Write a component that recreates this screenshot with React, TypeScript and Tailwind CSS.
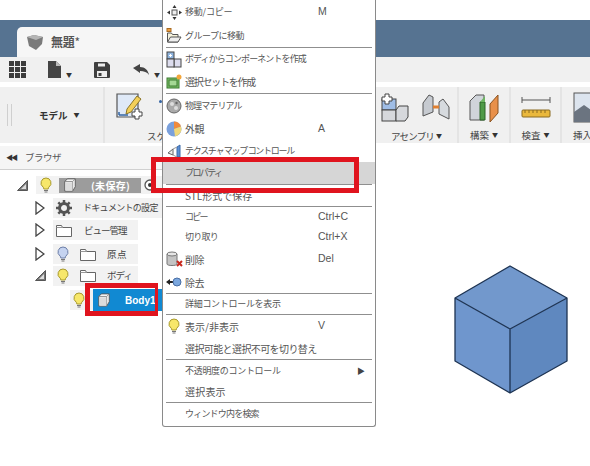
import type { ReactNode } from "react";

const font = { fontFamily: '"Noto Sans CJK JP", "Liberation Sans", sans-serif' };

function Bulb({ off = false }: { off?: boolean }) {
  const fill = off ? "#c5d3f0" : "#f7e76a";
  const line = off ? "#6d7fa8" : "#a89a2e";
  return (
    <svg width="12" height="16" viewBox="0 0 12 16" className="shrink-0">
      <path d="M6 1a5 5 0 0 0-3 9c.6.5.8 1 .8 2h4.400c0-1 .2-1.500.8-2a5 5 0 0 0-3-9z" fill={fill} stroke={line} />
      <path d="M4 13.500h4M4.500 15h3" stroke="#777" strokeWidth="1.200" />
    </svg>
  );
}

function Folder() {
  return (
    <svg width="16" height="13" viewBox="0 0 16 13" className="shrink-0">
      <path d="M.5 12.500v-11h5l1 2h9v9z" fill="#fff" stroke="#666" />
      <path d="M.5 3.500h6" stroke="#999" />
    </svg>
  );
}

function Box({ size = 16 }: { size?: number }) {
  return (
    <svg width={size} height={size} viewBox="0 0 16 16" className="shrink-0">
      <path d="M2 4l3-3h9v9l-3 5H2z" fill="#f4f4f4" stroke="#555" />
      <path d="M11 4v11M2 4h9l3-3" stroke="#888" fill="none" />
      <rect x="3" y="5" width="7.500" height="9.500" fill="#dcdcdc" />
    </svg>
  );
}

function Closed() {
  return (
    <svg width="10" height="14" viewBox="0 0 10 14" className="shrink-0">
      <path d="M1 1l8 6-8 6z" fill="#fff" stroke="#444" strokeWidth="1.300" />
    </svg>
  );
}

function Open() {
  return (
    <svg width="11" height="11" viewBox="0 0 11 11" className="shrink-0">
      <path d="M10.500.5v10H.5z" fill="#777" stroke="#555" />
      <path d="M9 4v5H4z" fill="#ddd" />
    </svg>
  );
}

function Caret() {
  return <span className="text-[6px] leading-none text-[#333]">▼</span>;
}

function Sep() {
  return <div className="mx-[3px] h-px shrink-0 bg-[#8f8f8f]" />;
}

function Row(props: { h: string; icon?: ReactNode; label: string; keyName?: string; arrow?: boolean; active?: boolean; track?: string }) {
  return (
    <div className={`flex shrink-0 items-center text-[10px] text-[#555] ${props.h} ${props.active ? "bg-[#d6d6d6]" : ""}`}>
      <span className="flex w-[22px] shrink-0 justify-center">{props.icon}</span>
      <span className={`w-[133px] shrink-0 whitespace-pre ${props.track ?? ""}`}>{props.label}</span>
      <span className="text-[10.500px]" style={{ fontFamily: '"Liberation Sans", sans-serif' }}>{props.keyName}</span>
      {props.arrow && <span className="ml-[39px] text-[8px] text-[#444]">▶</span>}
    </div>
  );
}

function ContextMenu() {
  return (
    <div className="absolute left-[162px] top-0 flex h-[427px] w-[214px] flex-col rounded-b-[3px] border-x border-b border-[#8a8a8a] bg-white">
      <Row h="h-6" label="移動/コピー" keyName="M" track="text-[9px] tracking-[-0.2px]" icon={
        <svg width="17" height="17" viewBox="0 0 17 17"><path d="M8.500 1l2 3h-4zM8.500 16l2-3h-4zM1 8.500l3-2v4zM16 8.500l-3-2v4z" fill="#333" /><rect x="6" y="6" width="5" height="5" fill="#eee" stroke="#555" /></svg>
      } />
      <Row h="h-[23px]" label="グループに移動" track="text-[9px] tracking-[-0.5px]" icon={
        <svg width="16" height="15" viewBox="0 0 16 15"><rect x="1" y="0.500" width="4" height="3" fill="#f0a040" stroke="#a86a20" /><path d="M1.500 14V5h4l1 1.500H12V14z" fill="#f5f2dc" stroke="#555" /><path d="M1.500 14l3-5H15l-3 5z" fill="#eee" stroke="#555" /></svg>
      } />
      <Sep />
      <Row h="h-[22px]" label="ボディからコンポーネントを作成" track="text-[9px] tracking-[-0.9px]" icon={
        <svg width="16" height="17" viewBox="0 0 16 17"><rect x="1" y="1" width="7" height="7" fill="#8fb4de" stroke="#444" /><rect x="8" y="8" width="7" height="8" fill="#dde" stroke="#444" /><rect x="1" y="8" width="7" height="8" fill="#dde" stroke="#444" /><path d="M3 4.500h3M4.500 3v3" stroke="#fff" /></svg>
      } />
      <Row h="h-[23px]" label="選択セットを作成" track="tracking-[-1.250px]" icon={
        <svg width="16" height="15" viewBox="0 0 16 15"><rect x="1" y="4" width="12" height="10" fill="#7cc06a" stroke="#3c7a30" /><rect x="3" y="6" width="8" height="6" fill="#a5d895" stroke="#3c7a30" /><circle cx="13" cy="3" r="2.500" fill="#f3a63b" /></svg>
      } />
      <Sep />
      <Row h="h-[23px]" label="物理マテリアル" track="text-[9px] tracking-[-0.9px]" icon={
        <svg width="16" height="16" viewBox="0 0 16 16"><circle cx="8" cy="8" r="7" fill="#aaa" stroke="#666" /><circle cx="6" cy="6" r="2" fill="#ddd" /><circle cx="10" cy="10" r="2" fill="#ddd" /><circle cx="10.500" cy="5" r="1.200" fill="#666" /></svg>
      } />
      <Row h="h-[23px]" label="外観" keyName="A" track="tracking-[-0.5px]" icon={
        <svg width="16" height="16" viewBox="0 0 16 16"><circle cx="8" cy="8" r="7.500" fill="#7aa0dc" /><path d="M8 8V.5a7.500 7.500 0 0 1 7 5z" fill="#f08a3c" /><path d="M8 8l7-2.500A7.500 7.500 0 0 1 9 15.400z" fill="#f0d87a" /></svg>
      } />
      <Row h="h-[22px]" label="テクスチャ マップ コントロール" track="text-[9px] tracking-[-1.300px]" icon={
        <svg width="15" height="15" viewBox="0 0 15 15"><path d="M1 9l5-4v6z" fill="#eee" stroke="#666" /><path d="M10 13V3l3-2v12z" fill="#5b8fd6" stroke="#3c6aa8" /><path d="M6 5l4-2M6 11l4 2" stroke="#999" /></svg>
      } />
      <Row h="h-[22px]" label="プロパティ" active track="text-[9px] tracking-[-1.600px]" />
      <Sep />
      <Row h="h-[21px]" label="STL形式で保存" />
      <Sep />
      <Row h="h-5" label="コピー" keyName="Ctrl+C" track="text-[9px] tracking-[-1.700px]" />
      <Row h="h-5" label="切り取り" keyName="Ctrl+X" track="text-[9px] tracking-[-0.750px]" />
      <Row h="h-6" label="削除" keyName="Del" track="tracking-[-0.500px]" icon={
        <svg width="17" height="16" viewBox="0 0 17 16"><path d="M1 3v10c0 2 10 2 10 0V3z" fill="#c4c4c4" stroke="#777" /><ellipse cx="6" cy="3" rx="5" ry="2" fill="#e6e6e6" stroke="#777" /><path d="M11 10l5 5M16 10l-5 5" stroke="#c8281e" strokeWidth="2" /></svg>
      } />
      <Row h="h-[22px]" label="除去" track="tracking-[-0.500px]" icon={
        <svg width="16" height="10" viewBox="0 0 16 10"><path d="M0 5l4-3v2h3v2H4v2z" fill="#222" /><circle cx="11" cy="5" r="4" fill="#7ba7de" stroke="#4a6fa5" /></svg>
      } />
      <Sep />
      <Row h="h-5" label="詳細コントロールを表示" track="text-[9px] tracking-[-0.3px]" />
      <Sep />
      <Row h="h-[22px]" label="表示/非表示" keyName="V" icon={<Bulb />} />
      <Row h="h-[22px]" label="選択可能と選択不可を切り替え" track="tracking-[-0.6px]" />
      <Sep />
      <Row h="h-[21px]" label="不透明度のコントロール" arrow track="text-[9px] tracking-[-0.3px]" />
      <Row h="h-[21px]" label="選択表示" track="tracking-[0.2px]" />
      <Sep />
      <Row h="h-[22px]" label="ウィンドウ内を検索" track="text-[9px] tracking-[-0.8px]" />
    </div>
  );
}

function Ribbon() {
  return (
    <div className="flex h-14 bg-[#f0f0f0] text-[9.500px] text-[#444]">
      <div className="flex w-[105px] items-center border-r-2 border-[#e4e4e4]">
        <div className="ml-[7px] h-[22px] w-[5px] border-x border-[#cfcfcf]" />
        <span className="ml-[27px] flex items-center gap-[6px] font-bold text-[#333]">モデル <Caret /></span>
      </div>
      <div className="flex w-[354px] flex-col border-r-2 border-[#e4e4e4] pt-[6px]">
        <div className="flex h-[30px] items-start">
          <svg width="28" height="28" viewBox="0 0 28 28" className="ml-[11px]">
            <path d="M1 1h21v23H1z" fill="#dfe9f7" stroke="#555" strokeWidth="1.200" />
            <path d="M3 22V19M3 22h9" stroke="#3465a4" strokeWidth="1.500" />
            <path d="M11 16L21 3l4 3-10 13-5 2z" fill="#f3cf58" stroke="#8a7428" />
            <path d="M19 16h4v3h3v4h-3v3h-4v-3h-3v-4h3z" fill="#fff" stroke="#444" />
          </svg>
          <span className="ml-[15px] mt-[7px] size-[3px] rounded-full bg-[#3465a4]" />
          <svg width="30" height="30" viewBox="0 0 30 30" className="ml-[218px]">
            <rect x="2" y="6" width="14" height="11" fill="#9fbde6" stroke="#444" />
            <rect x="2" y="17" width="14" height="11" fill="#d6d8dc" stroke="#444" />
            <path d="M16 17l3-4h9v11l-3 4h-9z" fill="#d6d8dc" stroke="#444" />
            <path d="M5 1h4v3h3v4H9v3H5V8H2V4h3z" fill="#fff" stroke="#444" />
          </svg>
          <svg width="28" height="28" viewBox="0 0 28 28" className="ml-[12px]">
            <path d="M1 23V10l6-8 4 2v15z" fill="#c6cad0" stroke="#555" />
            <path d="M27 26V14l-6-8-4 3v12z" fill="#d6dade" stroke="#555" />
            <path d="M11 14h6" stroke="#e08030" strokeWidth="3" />
          </svg>
        </div>
        <div className="flex items-center pt-[6px]">
          <span className="ml-[42px] whitespace-nowrap">スケッチ</span>
          <span className="ml-[206px] flex items-center gap-[2px] whitespace-nowrap tracking-[-0.8px]">アセンブリ <Caret /></span>
        </div>
      </div>
      <div className="flex w-[52px] flex-col items-center border-r-2 border-[#e4e4e4] pt-[5px]">
        <svg width="30" height="31" viewBox="0 0 30 31">
          <path d="M1 28V9l6-6h8v25z" fill="#d0d4da" stroke="#555" />
          <path d="M11 10h5v18h-5z" fill="#4f9a48" stroke="#2c6428" />
          <path d="M11 10l5-6v6z" fill="#6db563" />
          <path d="M21 30V12l8-9v18z" fill="#e8904a" stroke="#8a5320" />
        </svg>
        <span className="mt-[5px] flex items-center gap-[3px] whitespace-nowrap">構築 <Caret /></span>
      </div>
      <div className="flex w-[51px] flex-col items-center border-r-2 border-[#e4e4e4] pt-[5px]">
        <svg width="30" height="31" viewBox="0 0 30 31">
          <path d="M1 8h28M1 5v6M29 5v6" stroke="#555" />
          <rect x="1" y="18" width="28" height="7" rx="1" fill="#eab83c" stroke="#8a6a20" />
          <path d="M4 18v3M8 18v3M12 18v3M16 18v3M20 18v3M24 18v3" stroke="#8a6a20" />
        </svg>
        <span className="mt-[5px] flex items-center gap-[3px] whitespace-nowrap">検査 <Caret /></span>
      </div>
      <div className="flex flex-1 flex-col overflow-hidden pl-[11px] pt-[5px]">
        <svg width="17" height="31" viewBox="0 0 17 31">
          <rect x="1" y="1" width="30" height="29" fill="#dce4ee" stroke="#555" />
          <path d="M1 30V20l10-7 7 5v12z" fill="#6b7480" />
        </svg>
        <span className="mt-[5px] whitespace-nowrap">挿入</span>
      </div>
    </div>
  );
}

function Browser() {
  const chip = "flex h-5 items-center bg-[#f2f2f2] text-[9.500px] text-[#444]";
  return (
    <div className="w-[162px]">
      <div className="flex h-[24px] items-center gap-[9px] border-b border-[#d0d0d0] bg-[#f5f5f5] pl-[6px] text-[9.500px] text-[#555]">
        <span className="text-[7px] tracking-[-2px] text-[#333]">◀◀</span>
        <span className="tracking-[-0.5px]">ブラウザ</span>
      </div>
      <div className="flex flex-col pt-[6px]">
        <div className="flex h-[18px] items-center pl-[17px]">
          <Open />
          <div className="ml-[8px] flex h-[18px] flex-1 items-center bg-[#f2f2f2] pl-[4px]">
            <Bulb />
            <div className="ml-[7px] flex h-[15px] w-[82px] shrink-0 items-center bg-[#9c9c9c] pl-[4px]">
              <Box size={14} />
              <span className="ml-[14px] whitespace-nowrap text-[10px] font-bold tracking-[0.3px] text-white">(未保存)</span>
            </div>
            <svg width="12" height="12" viewBox="0 0 12 12" className="ml-[3px] shrink-0"><circle cx="6" cy="6" r="5" fill="#fff" stroke="#555" strokeWidth="1.300" /><circle cx="6" cy="6" r="2" fill="#333" /></svg>
          </div>
        </div>
        <div className="mt-1 flex h-5 items-center pl-[35px]">
          <Closed />
          <div className={`${chip} ml-[8px] flex-1 pl-[2px]`}>
            <svg width="16" height="16" viewBox="0 0 16 16" className="ml-[1px]"><circle cx="8" cy="8" r="4.500" fill="none" stroke="#555" strokeWidth="3" /><path d="M8 0v3M8 13v3M0 8h3M13 8h3M2.300 2.300l2 2M11.700 11.700l2 2M13.700 2.300l-2 2M4.300 11.700l-2 2" stroke="#555" strokeWidth="2.500" /></svg>
            <span className="ml-[11px] whitespace-nowrap text-[9px] tracking-[-0.7px]">ドキュメントの設定</span>
          </div>
        </div>
        <div className="mt-[3px] flex h-[18px] items-center pl-[35px]">
          <Closed />
          <div className={`${chip} ml-[8px] w-[85px] pl-[3px]`}>
            <Folder />
            <span className="ml-[12px] whitespace-nowrap tracking-[-1px]">ビュー管理</span>
          </div>
        </div>
        <div className="mt-[5px] flex h-5 items-center pl-[35px]">
          <Closed />
          <div className={`${chip} ml-[8px] w-[85px] pl-[4px]`}>
            <Bulb off />
            <span className="ml-[11px]"><Folder /></span>
            <span className="ml-[11px] tracking-[0.4px]">原点</span>
          </div>
        </div>
        <div className="mt-[2px] flex h-[19px] items-center pl-[35px]">
          <Open />
          <div className={`${chip} ml-[7px] w-[85px] pl-[4px]`}>
            <Bulb />
            <span className="ml-[11px]"><Folder /></span>
            <span className="ml-[11px] tracking-[-1px]">ボディ</span>
          </div>
        </div>
        <div className="mt-1 flex h-[22px] items-center pl-[70px]">
          <div className="flex h-5 w-[23px] items-center bg-[#f2f2f2] pl-[3px]"><Bulb /></div>
          <div className="flex h-[22px] flex-1 items-center bg-[#1189d2] pl-[4px]">
            <Box size={14} />
            <span className="ml-[14px] text-[10px] font-bold text-white" style={{ fontFamily: '"Liberation Sans", sans-serif' }}>Body1</span>
          </div>
        </div>
      </div>
    </div>
  );
}

export default function App() {
  return (
    <div className="relative h-[466px] w-[590px] overflow-hidden bg-white" style={font}>
      <div className="h-5" />
      <div className="flex h-[37px] items-end bg-[#567391] pl-[17px]">
        <div className="flex h-[30px] w-[220px] items-center rounded-tl-[5px] bg-[#f6f6f6] pl-[10px]">
          <svg width="16" height="15" viewBox="0 0 16 15"><path d="M0 2l7-2 9 2-1 7-6 6-7-4z" fill="#7a7a7a" /><path d="M7 0l9 2-7 3-9-3z" fill="#b5b5b5" /></svg>
          <span className="ml-[8px] text-xs font-bold tracking-[-0.3px] text-[#555]">無題<span className="font-normal">*</span></span>
        </div>
      </div>
      <div className="flex h-[25px] items-center bg-[#f0f0f0] pl-[9px]">
        <div className="grid grid-cols-3 gap-[1px]">
          {Array.from({ length: 9 }).map((_, i) => <span key={i} className="size-[5px] bg-[#3c3c3c]" />)}
        </div>
        <svg width="14" height="17" viewBox="0 0 14 17" className="ml-[22px]"><path d="M0 0h8l5 5v12H0z" fill="#444" /><path d="M8 0v5h5" fill="#bbb" /></svg>
        <span className="ml-[4px]"><Caret /></span>
        <svg width="16" height="16" viewBox="0 0 16 16" className="ml-[22px]"><path d="M0 1a1 1 0 0 1 1-1h12l3 3v12a1 1 0 0 1-1 1H1a1 1 0 0 1-1-1z" fill="#3f3f3f" /><rect x="4" y="1.500" width="7" height="3" fill="#ededed" /><rect x="3" y="9" width="10" height="6" fill="#ededed" /><rect x="4.500" y="11" width="3" height="3" fill="#3f3f3f" /></svg>
        <svg width="17" height="11" viewBox="0 0 17 11" className="ml-[23px]"><path d="M0 4l7-4v3c5 0 8 3 9 8-2-3-5-4-9-4v2z" fill="#444" /></svg>
        <span className="ml-[4px]"><Caret /></span>
      </div>
      <div className="h-[5px]" />
      <Ribbon />
      <div className="h-[3px]" />
      <Browser />

      <ContextMenu />

      <div className="absolute left-[151px] top-[157px] h-[36px] w-[208px] border-[5px] border-[#e0141e]" />
      <div className="absolute left-[85px] top-[283px] h-[33px] w-[73px] border-[5px] border-r-[3px] border-[#e0141e]" />

      <svg width="116" height="132" viewBox="0 0 116 132" className="absolute left-[453px] top-[264px]">
        <path d="M57 2L2 34l55 31 57-31z" fill="#7298cc" />
        <path d="M2 34v63l55 32V65z" fill="#6f96cd" />
        <path d="M114 34v63l-57 32V65z" fill="#5f88bf" />
        <path d="M57 2L2 34v63l55 32 57-32V34zM2 34l55 31 57-31M57 65v64" fill="none" stroke="#1d3352" strokeWidth="1.300" strokeLinejoin="round" />
      </svg>
    </div>
  );
}
